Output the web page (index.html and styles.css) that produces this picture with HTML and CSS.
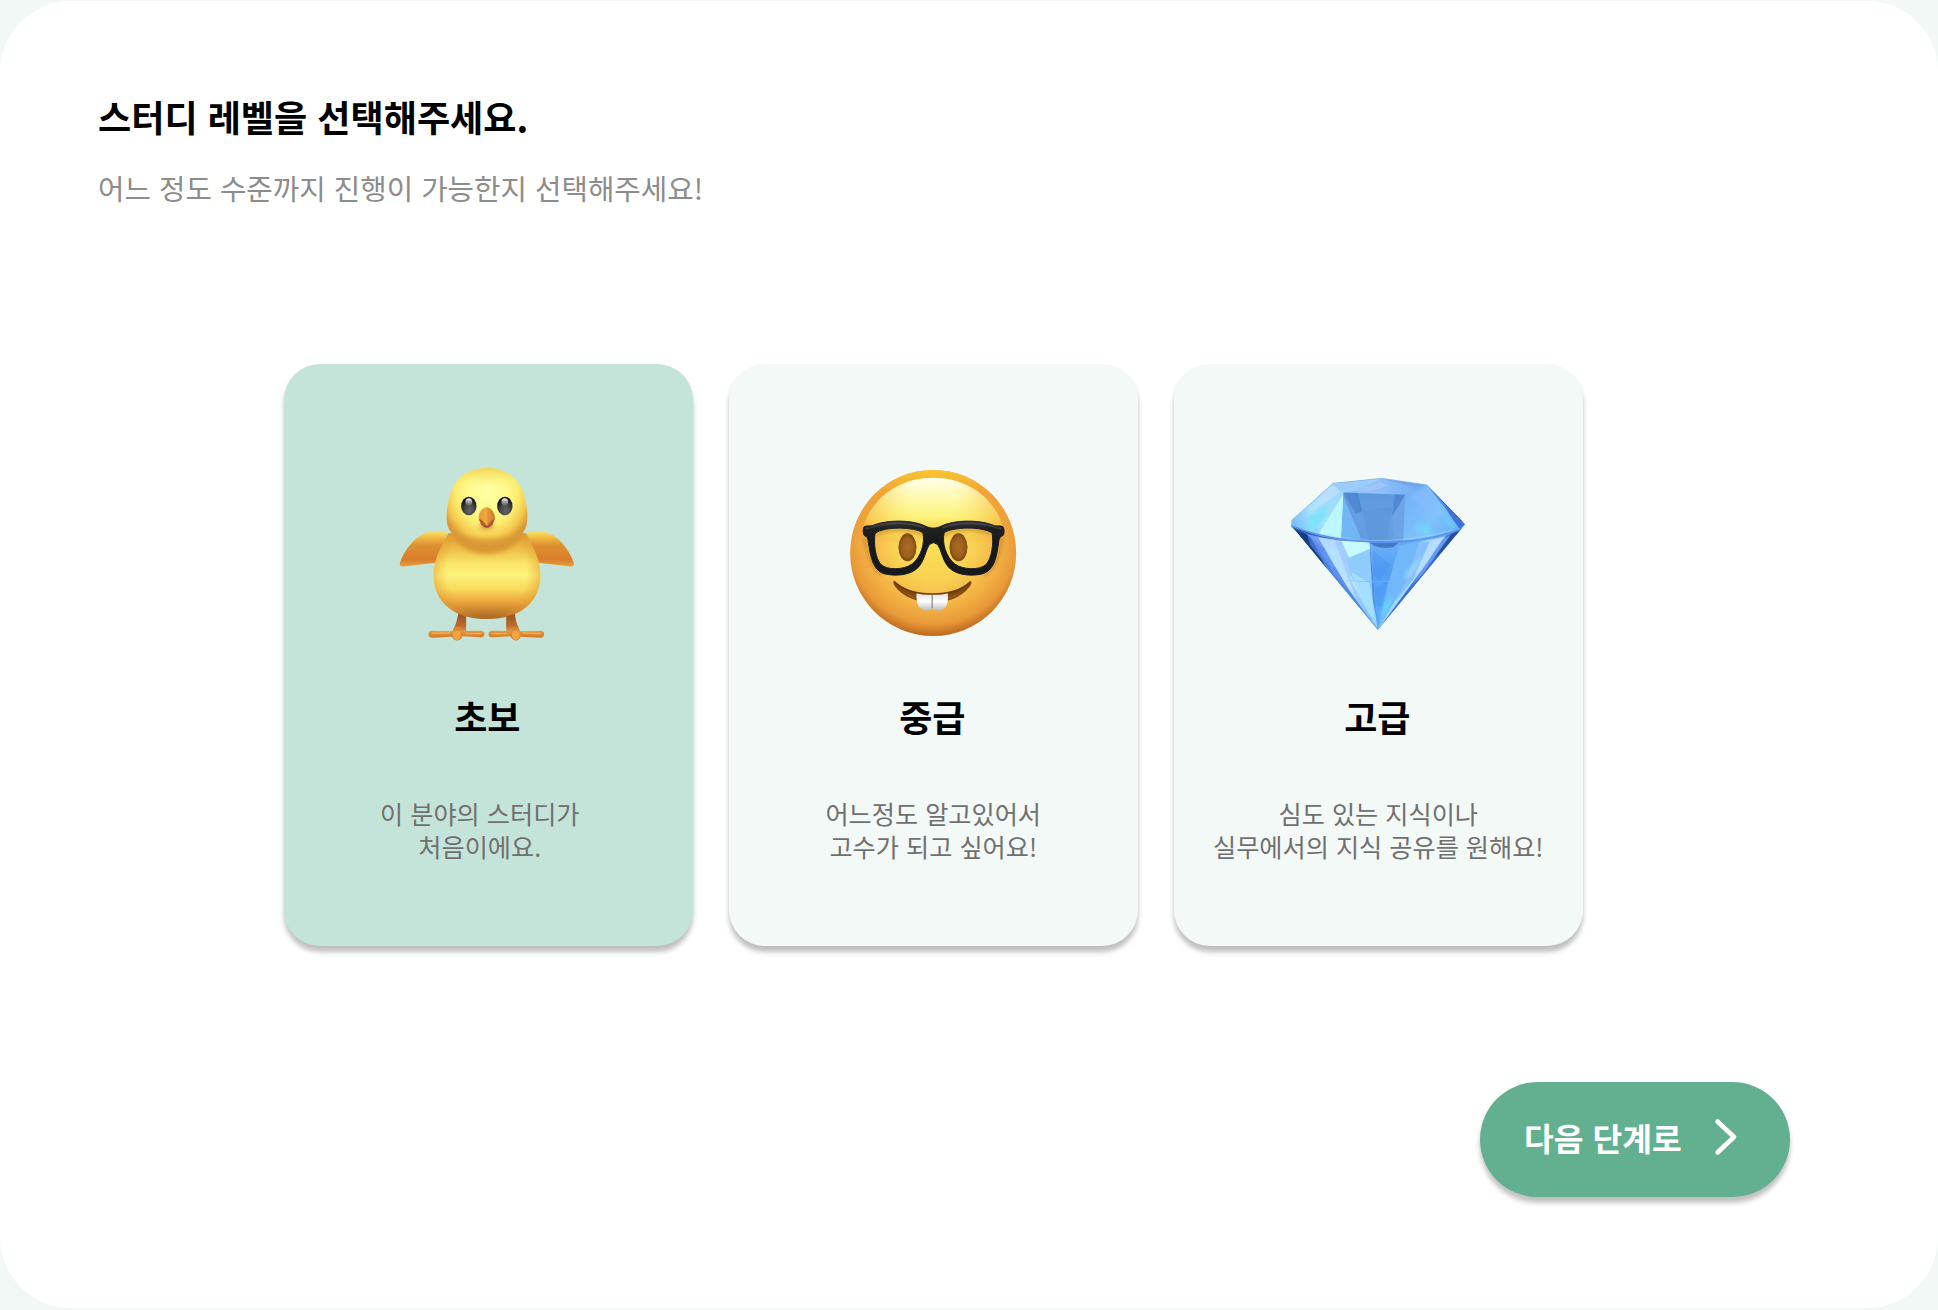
FILE: index.html
```html
<!DOCTYPE html>
<html lang="ko">
<head>
<meta charset="utf-8">
<title>스터디 레벨 선택</title>
<link rel="stylesheet" href="styles.css">
</head>
<body>
<main class="panel">
  <header class="intro">
    <h1 class="intro-title">스터디 레벨을 선택해주세요.</h1>
    <p class="intro-text">어느 정도 수준까지 진행이 가능한지 선택해주세요!</p>
  </header>

  <section class="levels">
    <article class="card card-selected">
      <svg class="emoji" viewBox="-4.5 0 600 600" aria-hidden="true">
        <defs>
          <linearGradient id="cBody" x1="0" y1="230" x2="0" y2="492" gradientUnits="userSpaceOnUse">
            <stop offset="0" stop-color="#dc9a35"/><stop offset=".22" stop-color="#f0c24b"/><stop offset=".36" stop-color="#f9e468"/><stop offset=".5" stop-color="#fdf27b"/><stop offset=".66" stop-color="#f8da5e"/><stop offset=".8" stop-color="#eda73d"/><stop offset=".92" stop-color="#c27c2c"/><stop offset="1" stop-color="#94591f"/>
          </linearGradient>
          <radialGradient id="cEdge" cx="292" cy="350" r="168" gradientUnits="userSpaceOnUse">
            <stop offset=".72" stop-color="#e9a030" stop-opacity="0"/><stop offset="1" stop-color="#dc9a30" stop-opacity=".6"/>
          </radialGradient>
          <radialGradient id="cHead" cx="292" cy="105" r="170" gradientTransform="translate(292 0) scale(.84 1) translate(-292 0)" gradientUnits="userSpaceOnUse">
            <stop offset="0" stop-color="#feffa6"/><stop offset=".4" stop-color="#fefb8c"/><stop offset=".65" stop-color="#fcec70"/><stop offset=".84" stop-color="#f5cb50"/><stop offset="1" stop-color="#dc9a36"/>
          </radialGradient>
          <linearGradient id="cTop" x1="0" y1="38" x2="0" y2="100" gradientUnits="userSpaceOnUse">
            <stop offset="0" stop-color="#eebd3c" stop-opacity=".65"/><stop offset="1" stop-color="#ffe966" stop-opacity="0"/>
          </linearGradient>
          <linearGradient id="cWing" x1="0" y1="228" x2="0" y2="335" gradientUnits="userSpaceOnUse">
            <stop offset="0" stop-color="#fbe664"/><stop offset=".2" stop-color="#f0b744"/><stop offset=".4" stop-color="#df8f30"/><stop offset=".8" stop-color="#d97e2c"/><stop offset="1" stop-color="#e9a13a"/>
          </linearGradient>
          <linearGradient id="cFoot" x1="0" y1="470" x2="0" y2="555" gradientUnits="userSpaceOnUse">
            <stop offset="0" stop-color="#8f4e22"/><stop offset=".5" stop-color="#bd6b2e"/><stop offset=".7" stop-color="#e6963c"/><stop offset="1" stop-color="#c77020"/>
          </linearGradient>
          <radialGradient id="cEye" cx=".55" cy=".75" r=".75">
            <stop offset="0" stop-color="#666"/><stop offset=".45" stop-color="#454545"/><stop offset=".85" stop-color="#161616"/><stop offset="1" stop-color="#111"/>
          </radialGradient>
          <linearGradient id="cShine" x1="0" y1="0" x2="0" y2="1">
            <stop offset="0" stop-color="#fff"/><stop offset="1" stop-color="#ddd" stop-opacity=".15"/>
          </linearGradient>
          <linearGradient id="cBeak" x1="268" x2="317" y1="0" y2="0" gradientUnits="userSpaceOnUse">
            <stop offset="0" stop-color="#e8952f"/><stop offset=".45" stop-color="#edaa3e"/><stop offset=".55" stop-color="#e29534"/><stop offset="1" stop-color="#cf792a"/>
          </linearGradient>
          <filter id="cSoft" x="-30%" y="-50%" width="160%" height="200%"><feGaussianBlur stdDeviation="7"/></filter>
          <clipPath id="cBodyClip"><path d="M178 235C154 276 132 316 132 362C132 404 152 444 190 467C218 484 252 492 292 492S367 484 395 467C433 444 453 404 453 362C453 316 431 276 408 235Z"/></clipPath>
        </defs>
        <path fill="url(#cWing)" d="M178 236C141 220 104 229 78 253C52 277 37 305 31 325C30 334 35 336 46 334L140 323L178 265Z"/>
        <path fill="url(#cWing)" d="M407 236C444 220 481 229 507 253C532 277 547 305 553 325C554 334 549 336 538 334L445 323L407 265Z"/>
        <path fill="url(#cFoot)" d="M207 472H230V528L270 527C282 527 285 531 285 537C285 545 279 548 270 547L219 544C214 559 194 561 188 545L130 548C121 549 117 544 117 537C117 529 124 526 132 528L188 529C198 512 203 498 207 472Z"/>
        <path fill="url(#cFoot)" d="M376 472H350V528L312 527C300 527 297 531 297 537C297 545 303 548 312 547L363 544C370 560 387 561 393 545L450 548C459 549 464 544 464 537C464 529 457 526 449 528L393 529C383 512 378 498 376 472Z"/>
        <g fill="#f1a441"><ellipse cx="202" cy="541" rx="12" ry="14"/><ellipse cx="379" cy="541" rx="12" ry="14"/></g>
        <g fill="none" stroke="#d88b2f" stroke-width="5" stroke-linecap="round"><path d="M193 525C199 515 210 517 216 525M363 525C369 515 380 517 386 525"/><path stroke="#f4b04d" stroke-width="4" d="M129 535L180 534M230 536L274 536M308 536L350 536M402 534L452 536"/></g>
        <path fill="url(#cBody)" d="M178 235C154 276 132 316 132 362C132 404 152 444 190 467C218 484 252 492 292 492S367 484 395 467C433 444 453 404 453 362C453 316 431 276 408 235Z"/>
        <path fill="url(#cEdge)" d="M178 235C154 276 132 316 132 362C132 404 152 444 190 467C218 484 252 492 292 492S367 484 395 467C433 444 453 404 453 362C453 316 431 276 408 235Z"/>
        <g clip-path="url(#cBodyClip)"><path filter="url(#cSoft)" fill="#d99835" d="M170 220Q215 297 292 297T416 220Z"/></g>
        <path fill="url(#cHead)" d="M292 39C232 39 196 73 184 112C174 145 167 181 174 211C184 249 232 272 292 272S402 249 411 211C418 181 411 145 401 112C388 73 350 39 292 39Z"/>
        <path fill="url(#cTop)" d="M292 39C232 39 196 73 184 112H401C388 73 350 39 292 39Z"/>
        <path filter="url(#cSoft)" fill="#d99835" opacity=".75" d="M188 236Q225 252 292 252T398 236Q365 283 292 283T188 236Z"/>
        <ellipse filter="url(#cSoft)" cx="292" cy="213" rx="22" ry="13" fill="#c78a2b" opacity=".7"/>
        <path fill="#8e4530" d="M268 188L274 207Q292 230 310 207L316 188Z"/>
        <path fill="#b75b32" d="M267 190Q292 220 317 190L309 207Q292 222 275 207Z"/>
        <path fill="url(#cBeak)" d="M292 156C273 160 267 177 268 191C278 195 286 204 292 213C299 204 307 195 316 191C317 177 309 160 292 156Z"/>
        <ellipse cx="238" cy="153" rx="23" ry="28" fill="url(#cEye)"/><ellipse cx="346" cy="153" rx="23" ry="28" fill="url(#cEye)"/>
        <ellipse cx="238" cy="141" rx="10" ry="11" fill="url(#cShine)"/><ellipse cx="346" cy="141" rx="10" ry="11" fill="url(#cShine)"/>
      </svg>
      <h2 class="card-title">초보</h2>
      <p class="card-text card-text-shifted">이 분야의 스터디가<br>처음이에요.</p>
    </article>

    <article class="card">
      <svg class="emoji" viewBox="10.5 0 600 600" aria-hidden="true">
        <defs>
          <radialGradient id="nFace" cx="311" cy="255" r="292" gradientUnits="userSpaceOnUse">
            <stop offset="0" stop-color="#fbe158"/><stop offset=".4" stop-color="#f9d353"/><stop offset=".68" stop-color="#f4b345"/><stop offset=".86" stop-color="#e99a38"/><stop offset="1" stop-color="#b9641e"/>
          </radialGradient>
          <linearGradient id="nRim" x1="0" y1="44" x2="0" y2="270" gradientUnits="userSpaceOnUse">
            <stop offset="0" stop-color="#f8c630"/><stop offset=".3" stop-color="#f2a333"/><stop offset="1" stop-color="#eb9437" stop-opacity="0"/>
          </linearGradient>
          <linearGradient id="nGlow" x1="0" y1="68" x2="0" y2="255" gradientUnits="userSpaceOnUse">
            <stop offset="0" stop-color="#fffee9"/><stop offset=".3" stop-color="#fffbb5"/><stop offset=".65" stop-color="#fdf277"/><stop offset="1" stop-color="#fbe057" stop-opacity="0"/>
          </linearGradient>
          <linearGradient id="nSide" x1="101" x2="521" y1="0" y2="0" gradientUnits="userSpaceOnUse">
            <stop offset="0" stop-color="#f2aa3a" stop-opacity=".65"/><stop offset=".35" stop-color="#f8d850" stop-opacity="0"/><stop offset=".65" stop-color="#f8d850" stop-opacity="0"/><stop offset="1" stop-color="#f2aa3a" stop-opacity=".65"/>
          </linearGradient>
          <linearGradient id="nFrame" x1="0" y1="198" x2="0" y2="260" gradientUnits="userSpaceOnUse">
            <stop offset="0" stop-color="#3c3d40"/><stop offset=".35" stop-color="#202124"/><stop offset="1" stop-color="#17191b"/>
          </linearGradient>
          <linearGradient id="nTooth" x1="0" y1="415" x2="0" y2="468" gradientUnits="userSpaceOnUse">
            <stop offset="0" stop-color="#e2e2e2"/><stop offset=".45" stop-color="#fff"/><stop offset="1" stop-color="#b9b9ba"/>
          </linearGradient>
          <radialGradient id="nEye"><stop offset="0" stop-color="#a96c25"/><stop offset=".65" stop-color="#9d611d"/><stop offset="1" stop-color="#7c4810"/></radialGradient>
          <filter id="nSoft" x="-20%" y="-40%" width="140%" height="180%"><feGaussianBlur stdDeviation="5"/></filter>
        </defs>
        <circle cx="311" cy="294" r="249" fill="url(#nFace)"/>
        <circle cx="311" cy="294" r="249" fill="url(#nRim)"/>
        <path fill="url(#nGlow)" d="M311 68C204 68 126 132 101 218V270H521V218C496 132 418 68 311 68Z"/>
        <path fill="url(#nSide)" d="M311 68C204 68 126 132 101 218V232H521V218C496 132 418 68 311 68Z"/>
        <path d="M105 246C112 294 126 342 158 360M518 246C511 294 499 342 465 360" fill="none" stroke="#bb721d" stroke-width="10" opacity=".45" filter="url(#nSoft)"/>
        <path d="M140 239C180 218 246 222 280 240M344 240C378 222 442 218 484 239" fill="none" stroke="#c88b27" stroke-width="10" opacity=".65" filter="url(#nSoft)"/>
        <ellipse cx="234" cy="277" rx="27" ry="42" fill="url(#nEye)"/><ellipse cx="387" cy="277" rx="27" ry="42" fill="url(#nEye)"/>
        <path fill="url(#nFrame)" stroke="#1c1e20" stroke-width="3" fill-rule="evenodd" d="M104 215C112 210 125 216 136 209C178 194 250 194 289 214C304 221 319 221 334 214C374 194 446 194 487 209C498 216 510 210 520 215C525 221 525 238 520 242C512 245 509 249 508 259C501 309 494 344 461 356C430 364 387 362 363 342C338 322 335 277 322 267Q312 259 302 267C289 278 286 322 261 342C237 362 194 364 163 356C130 344 124 309 116 259C115 249 112 245 105 242C100 238 100 221 104 215ZM137 235C132 263 137 311 155 329C174 346 223 345 248 327C275 305 287 264 280 233C256 216 164 213 137 235ZM344 233C337 264 349 305 376 327C401 345 450 346 469 329C487 311 493 263 488 235C461 213 368 216 344 233Z"/>
        <path d="M110 220C121 220 129 218 139 213C178 202 242 201 282 218M341 218C381 201 448 202 485 213C495 218 505 220 514 220" fill="none" stroke="#5c5d5f" stroke-width="4" stroke-linecap="round" opacity=".55"/>
        <path fill="#80480f" d="M196 378C239 427 377 427 422 378C429 379 425 390 419 397C392 431 352 442 311 442S221 429 195 392C190 383 190 377 196 378Z"/>
        <path fill="#a96d24" d="M213 404C250 437 370 437 407 404C374 445 252 450 213 404Z" opacity=".5"/>
        <path d="M196 382Q239 419 311 419T422 382" fill="none" stroke="#693708" stroke-width="4"/>
        <path fill="url(#nTooth)" d="M261 415Q284 421 309 419V460C302 469 291 468 281 465C265 459 260 442 261 415ZM309 419Q334 421 355 415C357 442 352 459 337 465C325 469 315 468 309 460Z"/>
        <path d="M308 419V460" stroke="#8e8b88" stroke-width="4"/>
      </svg>
      <h2 class="card-title">중급</h2>
      <p class="card-text">어느정도 알고있어서<br>고수가 되고 싶어요!</p>
    </article>

    <article class="card">
      <svg class="emoji" viewBox="10.5 0 600 600" aria-hidden="true">
        <defs>
          <linearGradient id="dTop" x1="170" y1="0" x2="470" y2="0" gradientUnits="userSpaceOnUse"><stop offset="0" stop-color="#86c9f7"/><stop offset=".45" stop-color="#90c1fa"/><stop offset="1" stop-color="#67a9f1"/></linearGradient>
          <linearGradient id="dLeft" x1="60" y1="215" x2="205" y2="110" gradientUnits="userSpaceOnUse"><stop offset="0" stop-color="#79bff7"/><stop offset=".4" stop-color="#a7e3fd"/><stop offset="1" stop-color="#9ed7fb"/></linearGradient>
          <linearGradient id="dTable" x1="0" y1="115" x2="0" y2="260" gradientUnits="userSpaceOnUse"><stop offset="0" stop-color="#5c98de"/><stop offset=".6" stop-color="#679fe2"/><stop offset="1" stop-color="#619ce0"/></linearGradient>
          <linearGradient id="dRight" x1="390" y1="120" x2="560" y2="230" gradientUnits="userSpaceOnUse"><stop offset="0" stop-color="#74b2f6"/><stop offset=".55" stop-color="#7fc2fd"/><stop offset="1" stop-color="#64abf5"/></linearGradient>
          <linearGradient id="dLow" x1="65" y1="225" x2="310" y2="520" gradientUnits="userSpaceOnUse"><stop offset="0" stop-color="#2958ad"/><stop offset=".3" stop-color="#4b82dc"/><stop offset=".7" stop-color="#4b8ae6"/><stop offset="1" stop-color="#529bf1"/></linearGradient>
          <linearGradient id="dPale" x1="150" y1="250" x2="310" y2="520" gradientUnits="userSpaceOnUse"><stop offset="0" stop-color="#b2d9fd"/><stop offset=".5" stop-color="#bae3ff"/><stop offset="1" stop-color="#73b8fc"/></linearGradient>
          <linearGradient id="dMid" x1="0" y1="260" x2="0" y2="525" gradientUnits="userSpaceOnUse"><stop offset="0" stop-color="#6cb0f8"/><stop offset=".35" stop-color="#559ff5"/><stop offset="1" stop-color="#5aaefc"/></linearGradient>
          <clipPath id="dClip"><path d="M52 196L176 85L322 70L458 90L572 208L558 225L310 525L66 230L50 216Z"/></clipPath>
          <filter id="dSoft" x="-20%" y="-20%" width="140%" height="140%"><feGaussianBlur stdDeviation="6"/></filter>
        </defs>
        <g clip-path="url(#dClip)">
          <path fill="#68a9f1" d="M40 60H580V530H40Z"/>
          <path fill="url(#dLeft)" d="M52 196L176 85L207 113L200 252L130 245L50 216Z"/>
          <path fill="#c9dffc" d="M140 120L170 92L185 96L195 112L120 166L93 190Z" opacity=".6"/>
          <path fill="#80e1fa" d="M108 178L160 150L155 185L116 233L92 222Z" filter="url(#dSoft)"/>
          <path fill="#baf7ff" d="M130 240L207 116L200 250Z"/>
          <path fill="url(#dTop)" d="M176 85L322 70L458 90L392 119L207 113Z"/>
          <path fill="#a6d1fc" d="M176 85L322 70L300 82L245 104L207 113Z" opacity=".65"/>
          <path fill="#6b9fe9" d="M322 71L458 90L420 97Z" opacity=".7"/>
          <path fill="#b4c7fa" d="M244 106L317 81L345 91L290 109Z" opacity=".45"/>
          <path fill="url(#dTable)" d="M207 113L392 119L386 258L285 262L205 248Z"/>
          <path fill="#71b7f3" d="M207 125L260 252L200 250Z"/>
          <path fill="#5089d2" d="M207 113H249L264 168L245 176Z"/>
          <path fill="#6da4e8" d="M365 118L392 119L389 254H360L352 188Z"/>
          <path fill="#5088d3" d="M361 119H392L353 184Z"/>
          <path fill="#5590d8" d="M264 168L352 155L338 256L283 257Z" opacity=".4"/>
          <path fill="url(#dRight)" d="M392 119L458 90L558 223L460 257H386Z"/>
          <path fill="#4a8be7" d="M458 90L572 208L555 221L516 164Z"/>
          <path fill="#2a4cae" d="M463 94L572 207L559 198L508 145Z"/>
          <path fill="#3e71d5" d="M510 150L568 209L557 223L536 194Z"/>
          <path fill="#8cbefd" d="M410 125L461 96L511 176L473 185Z" opacity=".45"/>
          <path fill="#73d5fa" d="M426 204L438 220L454 202L479 248L444 235L422 225ZM505 176L546 220L525 214Z" filter="url(#dSoft)"/>
          <path fill="url(#dLow)" d="M52 214Q167 262 310 263L310 525Z"/>
          <path fill="#173577" d="M62 224L98 239L107 270L139 309L163 351L108 287Z" opacity=".85"/>
          <path fill="#608ff0" d="M102 239L139 251L225 410L181 361Z"/>
          <path fill="#719df5" d="M96 237L132 245L148 280Z"/>
          <path fill="url(#dPale)" d="M130 246L209 259L310 525L224 406Z"/>
          <path fill="#8fbcf9" d="M181 258L223 264L228 376L310 525L247 437Z" opacity=".5"/>
          <path fill="#8dccfb" d="M208 262L285 263L298 490L228 360Z"/>
          <path fill="#c7faff" d="M201 257L285 262L287 281L223 308Z"/>
          <path fill="#a9e1ff" d="M230 350L284 384L303 477L309 520L252 420Z" opacity=".85"/>
          <path fill="url(#dMid)" d="M285 263L374 262L389 285L310 525Z"/>
          <path fill="#3e8bea" d="M295 286L350 330L316 377L296 360ZM302 402L338 376L322 450L308 456Z" opacity=".3"/>
          <path fill="#71b8fb" d="M374 272L440 258L399 378L310 525L340 390Z"/>
          <path fill="#a2d7fe" d="M434 261L521 242L454 347L310 525L397 376Z"/>
          <path fill="#7cb5f7" d="M434 261L468 260L418 370L364 439Z" opacity=".7"/>
          <path fill="#bbdfff" d="M465 260L519 242L451 344L421 360Z" opacity=".75"/>
          <path fill="#3c6bce" d="M513 244L562 220L310 525L418 378L458 325Z"/>
          <path fill="#6599f2" d="M505 252L528 240L444 358L411 392Z"/>
          <path fill="#24478c" d="M530 238L557 224L500 291L480 309Z" opacity=".85"/>
          <path fill="#65dcfb" d="M323 466L333 440L354 424L351 450L319 493Z" opacity=".75" filter="url(#dSoft)"/>
          <path fill="#aaf1ff" d="M157 285L178 279L194 330L181 337ZM389 357L433 308L443 314L396 379Z" opacity=".45" filter="url(#dSoft)"/>
          <path fill="#427cc9" d="M285 263L374 262L357 277Q325 282 303 274Z"/>
          <path fill="none" stroke="#75bdfc" stroke-width="3" opacity=".6" d="M218 376Q310 386 414 373"/>
        </g>
        <path fill="none" stroke="#5b94ee" stroke-width="5" d="M51 213Q165 257 285 260Q435 269 560 222"/>
        <path fill="none" stroke="#b8deff" stroke-width="2" opacity=".7" d="M83 221Q184 254 285 256Q410 261 535 225"/>
        <path fill="none" stroke="#7fb3ee" stroke-width="2" d="M52 196L176 85L322 70L458 90M52 196V216"/>
      </svg>
      <h2 class="card-title">고급</h2>
      <p class="card-text">심도 있는 지식이나<br>실무에서의 지식 공유를 원해요!</p>
    </article>
  </section>

  <footer class="actions">
    <button class="next" type="button">
      <span>다음 단계로</span>
      <svg class="chevron" viewBox="0 0 24 38" aria-hidden="true"><path d="M3.5 3.5L20 19L3.5 34.5"/></svg>
    </button>
  </footer>
</main>
</body>
</html>
```
FILE: styles.css
```css
* {
  box-sizing: border-box;
}

body {
  margin: 0;
  height: 1310px;
  padding: 1px 0 2px;
  background: #f2f8f6;
  font-family: "Noto Sans CJK KR", "Noto Sans", sans-serif;
}

h1,
h2,
p {
  margin: 0;
}

.panel {
  height: 1307px;
  padding: 89px 148px 0 98px;
  border-radius: 71px;
  background: #fff;
}

.intro-title {
  font-size: 36.1px;
  font-weight: 700;
  line-height: 52px;
  color: #000;
}

.intro-text {
  margin-top: 25px;
  font-size: 28.75px;
  line-height: 42px;
  color: #8c8c8c;
}

.levels {
  display: flex;
  gap: 36.5px;
  margin: 154.5px 0 0 186px;
}

.card {
  width: 408.5px;
  height: 582px;
  padding-top: 91.5px;
  border-radius: 36px;
  background: #f3f9f7;
  box-shadow: 0 5.7px 5.7px rgba(0, 0, 0, .25);
  text-align: center;
}

.card-selected {
  background: #c5e4d9;
}

.emoji {
  display: block;
  width: 200px;
  height: 200px;
  margin: 0 0 0 103.5px;
}

.card-title {
  margin-top: 35px;
  padding-right: 2px;
  font-size: 36px;
  font-weight: 700;
  line-height: 52px;
  color: #000;
}

.card-text {
  margin-top: 55px;
  font-size: 25.2px;
  line-height: 33px;
  color: #707070;
  white-space: nowrap;
}

.card-text-shifted {
  padding-right: 17px;
}

.actions {
  display: flex;
  justify-content: flex-end;
  margin-top: 136.5px;
}

.next {
  display: flex;
  align-items: center;
  gap: 32px;
  width: 310px;
  height: 115px;
  padding: 0 0 5px 44px;
  border: 0;
  border-radius: 58px;
  background: #63b091;
  box-shadow: 0 5.7px 5.7px rgba(0, 0, 0, .25);
  color: #fff;
  font: 700 32.3px/46px "Noto Sans CJK KR", "Noto Sans", sans-serif;
}

.chevron {
  width: 24px;
  height: 38px;
  fill: none;
  stroke: #fff;
  stroke-width: 4.6;
  stroke-linecap: round;
  stroke-linejoin: round;
}
```
